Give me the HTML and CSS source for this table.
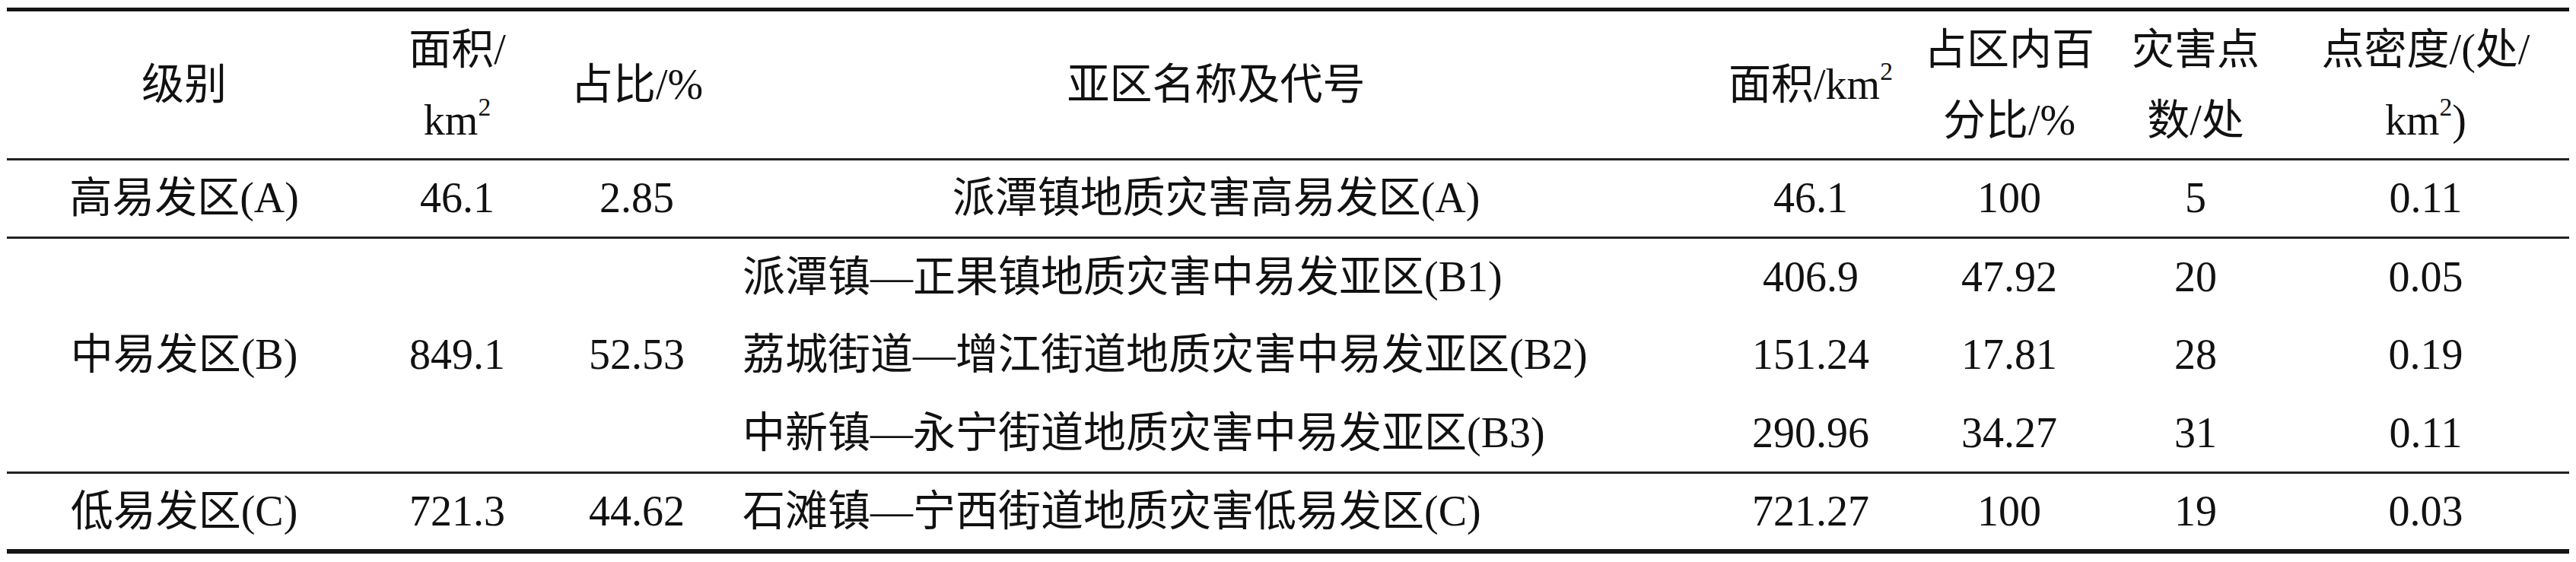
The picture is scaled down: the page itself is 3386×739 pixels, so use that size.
FILE: index.html
```html
<!DOCTYPE html>
<html lang="zh-CN">
<head>
<meta charset="utf-8">
<title>地质灾害易发区分区表</title>
<link rel="stylesheet" href="styles.css">
</head>
<body>
<div class="page">
<table class="grid">
<colgroup>
<col class="c1"><col class="c2"><col class="c3"><col class="c4"><col class="c5"><col class="c6"><col class="c7"><col class="c8">
</colgroup>
<thead>
<tr class="head">
<th>级别</th>
<th>面积/<br>km<sup>2</sup></th>
<th>占比/%</th>
<th>亚区名称及代号</th>
<th>面积/km<sup>2</sup></th>
<th>占区内百<br>分比/%</th>
<th>灾害点<br>数/处</th>
<th>点密度/(处/<br>km<sup>2</sup>)</th>
</tr>
</thead>
<tbody>
<tr class="row ra">
<td>高易发区(A)</td><td>46.1</td><td>2.85</td><td>派潭镇地质灾害高易发区(A)</td><td>46.1</td><td>100</td><td>5</td><td>0.11</td>
</tr>
<tr class="row">
<td rowspan="3">中易发区(B)</td><td rowspan="3">849.1</td><td rowspan="3">52.53</td><td class="name">派潭镇—正果镇地质灾害中易发亚区(B1)</td><td>406.9</td><td>47.92</td><td>20</td><td>0.05</td>
</tr>
<tr class="row">
<td class="name">荔城街道—增江街道地质灾害中易发亚区(B2)</td><td>151.24</td><td>17.81</td><td>28</td><td>0.19</td>
</tr>
<tr class="row rb">
<td class="name">中新镇—永宁街道地质灾害中易发亚区(B3)</td><td>290.96</td><td>34.27</td><td>31</td><td>0.11</td>
</tr>
<tr class="row rc">
<td>低易发区(C)</td><td>721.3</td><td>44.62</td><td class="name">石滩镇—宁西街道地质灾害低易发区(C)</td><td>721.27</td><td>100</td><td>19</td><td>0.03</td>
</tr>
</tbody>
</table>
</div>
</body>
</html>
```
FILE: styles.css
```css
html, body {
  margin: 0;
  padding: 0;
  background: #ffffff;
}

.page {
  padding: 10px 9px 0 9px;
}

.grid {
  width: 3368px;
  table-layout: fixed;
  border-collapse: collapse;
  font-family: "Liberation Serif", "Noto Sans CJK SC", serif;
  font-size: 56px;
  color: #111111;
}

.c1 { width: 466px; }
.c2 { width: 252px; }
.c3 { width: 220px; }
.c4 { width: 1303px; }
.c5 { width: 260px; }
.c6 { width: 262px; }
.c7 { width: 228px; }
.c8 { width: 377px; }

.grid th,
.grid td {
  padding: 0;
  text-align: center;
  vertical-align: middle;
  font-weight: normal;
  white-space: nowrap;
}

.head {
  height: 197px;
  border-top: 5px solid #151515;
  border-bottom: 3px solid #222222;
}

.head th {
  line-height: 93px;
}

.row {
  height: 103px;
}

.row td {
  line-height: 1.2;
}

.ra,
.rb {
  border-bottom: 3px solid #222222;
}

.rc {
  border-bottom: 6px solid #151515;
}

.grid td.name {
  text-align: left;
  padding-left: 29px;
}

sup {
  font-size: 0.6em;
  line-height: 0;
  vertical-align: 0.75em;
}
```
